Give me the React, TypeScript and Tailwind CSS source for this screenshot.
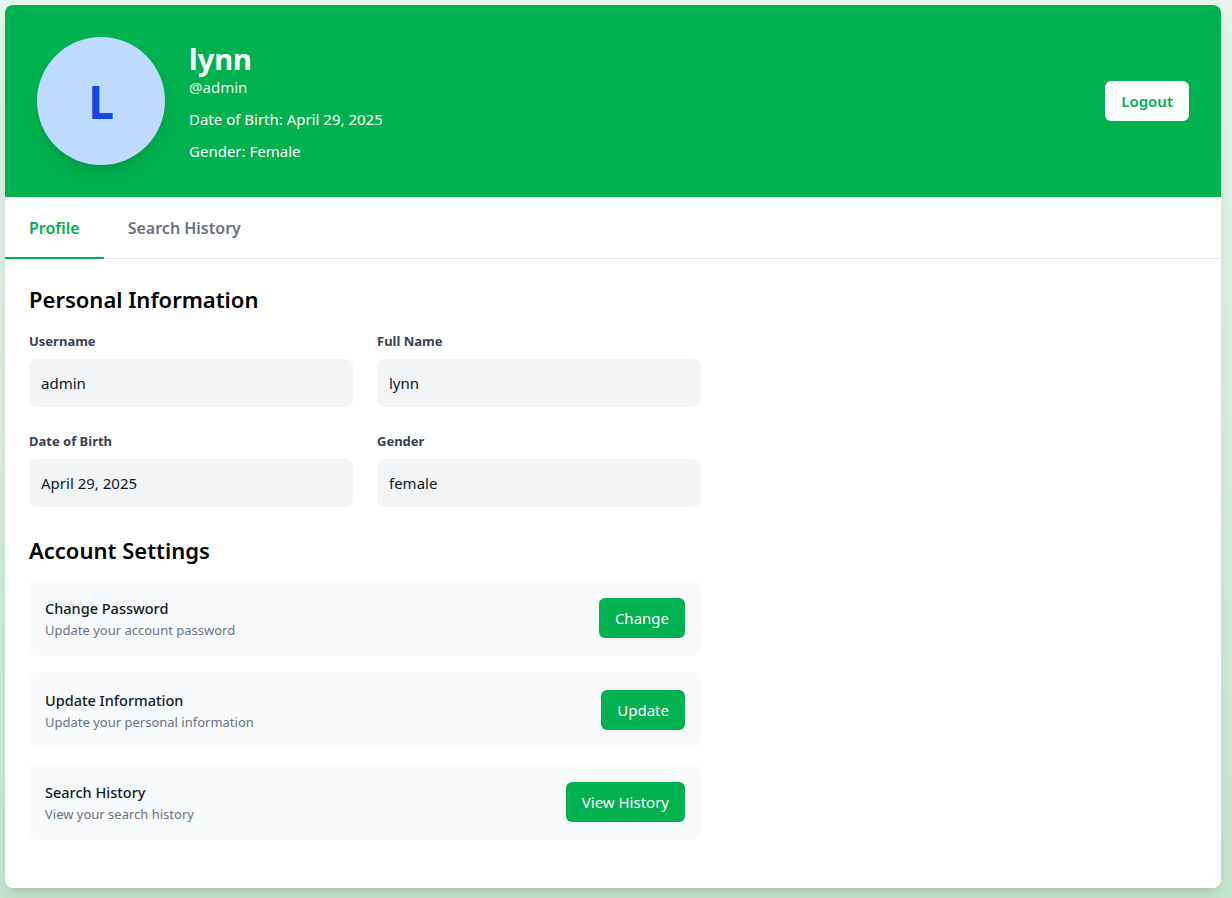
import React from "react";

const font = { fontFamily: '"Noto Sans", "Open Sans", sans-serif' };

function Field({ label, value }: { label: string; value: string }) {
  return (
    <div>
      <div className="text-[13px] leading-5 font-bold text-gray-700 mb-2">{label}</div>
      <div className="h-12 rounded-lg bg-gray-100 px-3 flex items-center text-[15px] text-gray-900">{value}</div>
    </div>
  );
}

function SettingRow({ title, sub, btn }: { title: string; sub: string; btn: string }) {
  return (
    <div className="h-[76px] rounded-lg bg-gray-50 px-4 flex items-center justify-between">
      <div>
        <div className="text-[14.5px] leading-6 font-medium text-gray-900">{title}</div>
        <div className="text-[13px] leading-5 text-gray-500">{sub}</div>
      </div>
      <button className="h-10 px-4 rounded-md bg-[#00b14f] text-white text-[15px]">{btn}</button>
    </div>
  );
}

export default function App() {
  return (
    <div style={font} className="min-h-[898px] bg-gradient-to-b from-[#e6f4ea] to-[#c5e4cf] pt-[5px] pl-[5px] pb-[11px]">
      <div className="w-[1216px] bg-white rounded-lg shadow-lg overflow-hidden">
        <div className="bg-[#00b14f] p-8 flex items-center justify-between">
          <div className="flex items-center">
            <div className="w-32 h-32 rounded-full bg-blue-200 shadow-lg flex items-center justify-center text-[46px] font-bold text-blue-700">L</div>
            <div className="ml-6 pt-[2px] text-white">
              <div className="text-[29px] leading-9 font-bold">lynn</div>
              <div className="text-[15px] leading-5 text-white/90">@admin</div>
              <div className="text-[15px] leading-6 mt-[10px]">Date of Birth: April 29, 2025</div>
              <div className="text-[15px] leading-6 mt-2">Gender: Female</div>
            </div>
          </div>
          <button className="h-10 px-4 rounded-md bg-white text-[#00b14f] text-[15px] font-semibold">Logout</button>
        </div>
        <div className="flex border-b border-gray-200">
          <div className="px-6 pt-[17px] pb-[15px] text-[16px] leading-7 font-semibold text-[#00b14f] border-b-2 border-[#00b14f] -mb-px">Profile</div>
          <div className="px-6 pt-[17px] pb-[15px] text-[16px] leading-7 font-semibold text-gray-500 -mb-px border-b-2 border-transparent">Search History</div>
        </div>
        <div className="px-6 pt-6 pb-[48px]">
          <div className="w-[672px]">
            <h2 className="text-[22px] leading-8 font-semibold text-black mb-4">Personal Information</h2>
            <div className="grid grid-cols-2 gap-x-6 gap-y-6">
              <Field label="Username" value="admin" />
              <Field label="Full Name" value="lynn" />
              <Field label="Date of Birth" value="April 29, 2025" />
              <Field label="Gender" value="female" />
            </div>
            <h2 className="text-[22px] leading-8 font-semibold text-black mt-[27px] mb-[14px]">Account Settings</h2>
            <div className="flex flex-col gap-4">
              <SettingRow title="Change Password" sub="Update your account password" btn="Change" />
              <SettingRow title="Update Information" sub="Update your personal information" btn="Update" />
              <SettingRow title="Search History" sub="View your search history" btn="View History" />
            </div>
          </div>
        </div>
      </div>
    </div>
  );
}
